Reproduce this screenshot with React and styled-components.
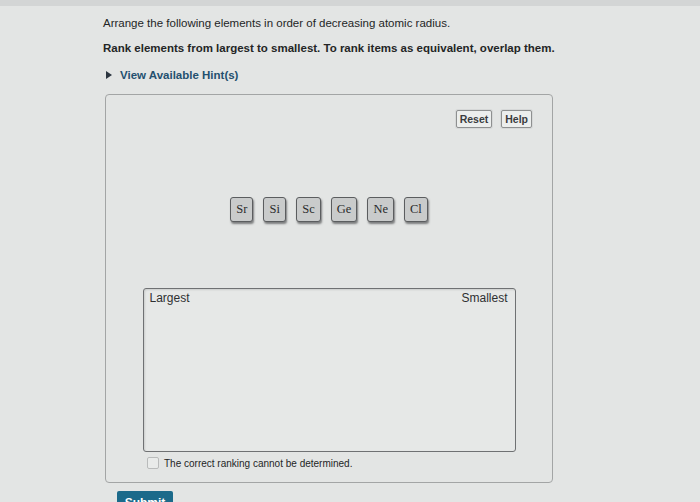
import React, { useState } from "react";
import styled, { createGlobalStyle } from "styled-components";

const GlobalStyle = createGlobalStyle`
  html, body {
    margin: 0;
    padding: 0;
    background: #e3e5e4;
    font-family: "Liberation Sans", Arial, sans-serif;
    color: #242526;
  }
`;

const Page = styled.div`
  width: 700px;
  height: 502px;
  overflow: hidden;
  box-sizing: border-box;
  padding: 10px 0 0 103px;
  border-top: 6px solid #d3d5d5;
`;

const Prompt = styled.p`
  margin: 0;
  font-size: 11.5px;
  line-height: 14px;
  font-weight: ${({ bold }) => (bold ? 700 : 400)};
  margin-bottom: ${({ gap }) => gap}px;
`;

const HintToggle = styled.div`
  display: flex;
  align-items: center;
  gap: 8px;
  margin-left: 3px;
  font-size: 11.5px;
  font-weight: 700;
  color: #24506f;
  height: 14px;

  &::before {
    content: "";
    border-left: 6px solid #2c3640;
    border-top: 4px solid transparent;
    border-bottom: 4px solid transparent;
  }
`;

const Panel = styled.div`
  margin: 12px 0 0 2px;
  width: 448px;
  height: 389px;
  box-sizing: border-box;
  border: 1px solid #a3a5a5;
  border-radius: 4px;
  padding: 15px 20px 0 20px;
  display: flex;
  flex-direction: column;
`;

const Toolbar = styled.div`
  display: flex;
  justify-content: flex-end;
  gap: 9px;
`;

const ToolButton = styled.button`
  font-family: "Liberation Sans", Arial, sans-serif;
  font-size: 10.5px;
  font-weight: 700;
  color: #3a3c3e;
  background: #eceeed;
  border: 1px solid #8e9090;
  border-radius: 2px;
  height: 18px;
  padding: 0 3px;
  line-height: 16px;
  box-shadow: 0 0 0 1px #d6d8d8;
`;

const TileRow = styled.div`
  display: flex;
  justify-content: center;
  gap: 10px;
  margin-top: 69px;
`;

const Tile = styled.div`
  min-width: 23px;
  height: 25px;
  box-sizing: border-box;
  padding: 0 5px;
  display: flex;
  align-items: center;
  justify-content: center;
  font-family: "Liberation Serif", "Times New Roman", serif;
  font-size: 12.5px;
  color: #2a2b2c;
  background: #c9cbcb;
  border: 1.5px solid #5b5d5f;
  border-radius: 3px;
  box-shadow: 1px 2px 2px rgba(40, 42, 44, 0.55);
`;

const DropZone = styled.div`
  align-self: center;
  margin-top: 66px;
  width: 373px;
  height: 164px;
  box-sizing: border-box;
  border: 1px solid #6f7173;
  border-radius: 3px;
  background: #e6e8e7;
  box-shadow: inset 1px 1px 2px rgba(0, 0, 0, 0.12);
  display: flex;
  justify-content: space-between;
  padding: 2px 7px 0 6px;
  font-size: 12px;
  color: #2e3031;
`;

const CheckRow = styled.label`
  display: flex;
  align-items: center;
  gap: 5px;
  margin: 5px 0 0 21px;
  font-size: 10px;
  color: #242526;
`;

const Box = styled.span`
  width: 10px;
  height: 10px;
  border: 1px solid #b9bbbb;
  border-radius: 2px;
  background: #e9ebea;
`;

const Submit = styled.button`
  margin: 8px 0 0 14px;
  width: 56px;
  height: 24px;
  border: none;
  border-radius: 2px;
  background: #1b6a8a;
  color: #ffffff;
  font-family: "Liberation Sans", Arial, sans-serif;
  font-size: 12px;
  font-weight: 700;
  padding: 0;
  text-align: center;
`;

const elements = ["Sr", "Si", "Sc", "Ge", "Ne", "Cl"];

export default function App() {
  const [checked, setChecked] = useState(false);

  return (
    <>
      <GlobalStyle />
      <Page>
        <Prompt gap={11}>
          Arrange the following elements in order of decreasing atomic radius.
        </Prompt>
        <Prompt bold gap={13}>
          Rank elements from largest to smallest. To rank items as equivalent, overlap them.
        </Prompt>
        <HintToggle>View Available Hint(s)</HintToggle>
        <Panel>
          <Toolbar>
            <ToolButton>Reset</ToolButton>
            <ToolButton>Help</ToolButton>
          </Toolbar>
          <TileRow>
            {elements.map((el) => (
              <Tile key={el}>{el}</Tile>
            ))}
          </TileRow>
          <DropZone>
            <span>Largest</span>
            <span>Smallest</span>
          </DropZone>
          <CheckRow onClick={() => setChecked(!checked)}>
            <Box />
            The correct ranking cannot be determined.
          </CheckRow>
        </Panel>
        <Submit>Submit</Submit>
      </Page>
    </>
  );
}
